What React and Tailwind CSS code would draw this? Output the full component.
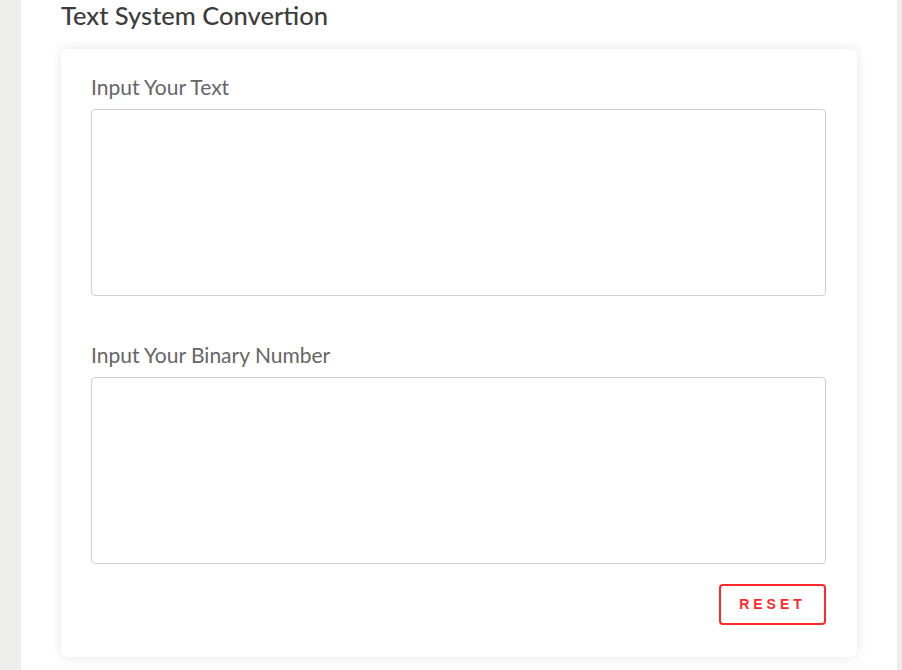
import React, { useState } from "react"

const Field = ({ label, value, onChange, className }) => {
  return (
    <div className={"flex flex-col " + (className || "")}>
      <label className="text-[21px] leading-[26px] text-[#666666] font-['Lato',sans-serif] mb-[9px]">{label}</label>
      <textarea
        value={value}
        onChange={(e) => onChange(e.target.value)}
        className="h-[187px] w-full resize-none rounded-[4px] border border-[#cfcfcf] bg-white p-3 outline-none"
      />
    </div>
  )
}

export default function App() {
  const [text, setText] = useState("")
  const [binary, setBinary] = useState("")

  return (
    <div className="flex h-[670px] w-full overflow-hidden bg-[#eeeeec]">
      <div className="w-[21px] shrink-0 bg-[#eeeeec]" />
      <div className="flex-1 bg-white px-[40px]">
        <h2 className="text-[25.5px] leading-[30px] text-[#3d3d3d] font-['Lato',sans-serif] font-medium">
          Text System Convertion
        </h2>
        <div className="mt-[19px] rounded-[6px] bg-white pl-[30px] pr-[31px] pt-[25px] pb-[32px] shadow-[0_0_12px_rgba(0,0,0,0.10)]">
          <Field label="Input Your Text" value={text} onChange={setText} />
          <Field label="Input Your Binary Number" value={binary} onChange={setBinary} className="mt-[46px]" />
          <div className="mt-[20px] flex justify-end">
            <button
              onClick={() => { setText(""); setBinary("") }}
              className="h-[41px] w-[107px] rounded-[4px] border-2 border-[#ff2a2a] text-[14px] font-bold tracking-[4px] text-[#ff2a2a] font-['Liberation_Sans',sans-serif]"
            >
              RESET
            </button>
          </div>
        </div>
      </div>
      <div className="w-[5px] shrink-0 bg-[#eeeeec]" />
    </div>
  )
}
